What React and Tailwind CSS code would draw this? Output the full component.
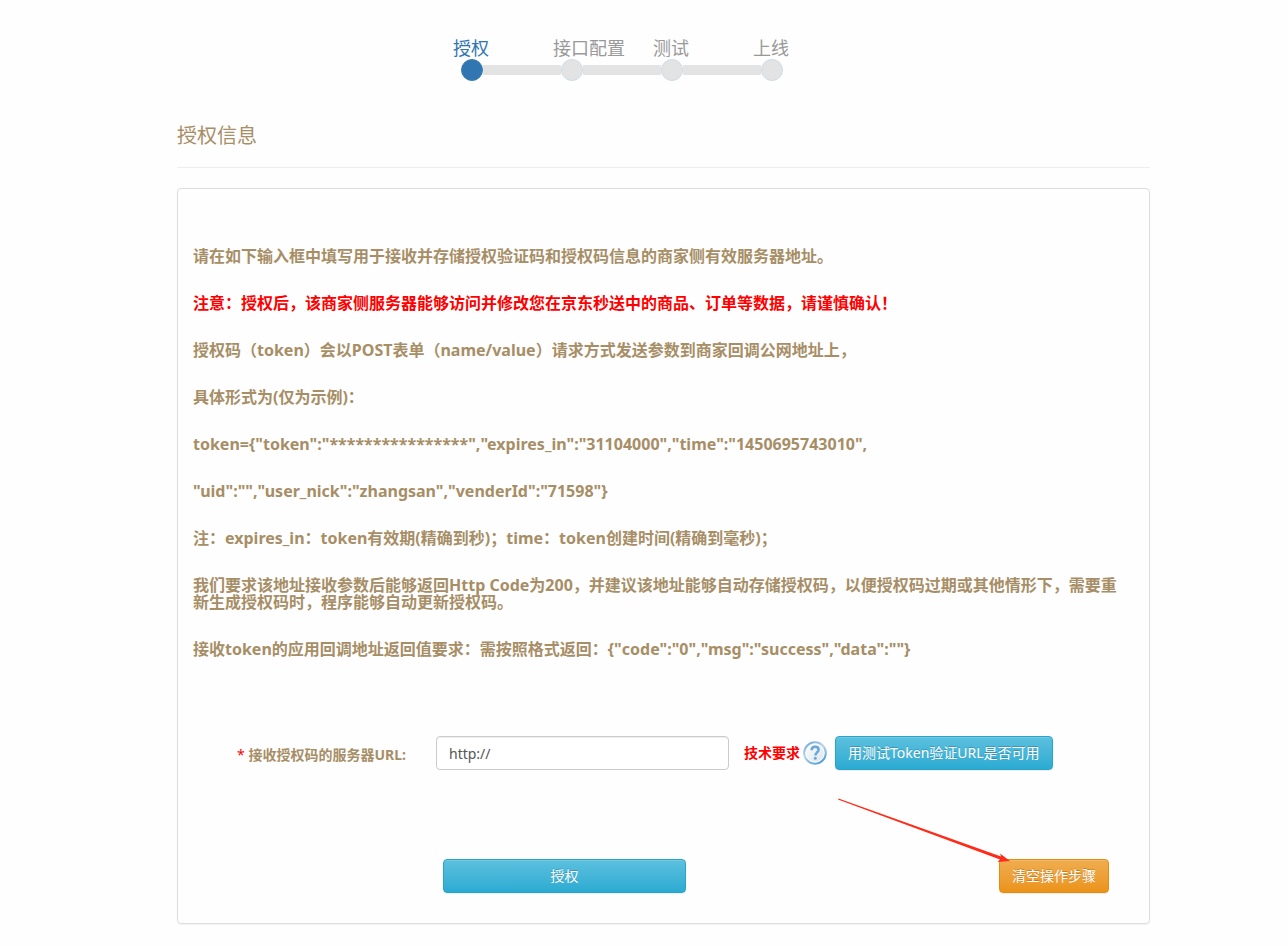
const steps = ['授权', '接口配置', '测试', '上线'];

const paragraphs = [
  { text: '请在如下输入框中填写用于接收并存储授权验证码和授权码信息的商家侧有效服务器地址。' },
  {
    text: '注意：授权后，该商家侧服务器能够访问并修改您在京东秒送中的商品、订单等数据，请谨慎确认！',
    warning: true,
  },
  { text: '授权码（token）会以POST表单（name/value）请求方式发送参数到商家回调公网地址上，' },
  { text: '具体形式为(仅为示例)：' },
  { text: 'token={"token":"****************","expires_in":"31104000","time":"1450695743010",' },
  { text: '"uid":"","user_nick":"zhangsan","venderId":"71598"}' },
  { text: '注：expires_in：token有效期(精确到秒)；time：token创建时间(精确到毫秒)；' },
  {
    text: '我们要求该地址接收参数后能够返回Http Code为200，并建议该地址能够自动存储授权码，以便授权码过期或其他情形下，需要重新生成授权码时，程序能够自动更新授权码。',
  },
  { text: '接收token的应用回调地址返回值要求：需按照格式返回：{"code":"0","msg":"success","data":""}' },
];

function Steps() {
  return (
    <ol className="ml-[276px] flex">
      {steps.map((label, i) => (
        <li key={label} className="w-[100px] shrink-0" aria-current={i === 0 ? 'step' : undefined}>
          <div
            className={
              i === 0
                ? 'whitespace-nowrap text-lg leading-[22px] text-[#3276b1]'
                : 'whitespace-nowrap text-lg leading-[22px] text-[#999999]'
            }
          >
            {label}
          </div>
          <div className="-mr-2 ml-2 flex items-center">
            <span
              className={
                i === 0
                  ? 'size-[22px] shrink-0 rounded-full border border-[#3a7fae] bg-[#3276b1]'
                  : 'size-[22px] shrink-0 rounded-full border border-[#cbdce6] bg-[#e3e3e3]'
              }
            />
            {i < steps.length - 1 && <span className="h-[10px] flex-1 bg-[#e3e3e3]" />}
          </div>
        </li>
      ))}
    </ol>
  );
}

function HelpIcon() {
  return (
    <svg viewBox="0 0 24 24" className="size-6" role="img" aria-label="帮助">
      <defs>
        <linearGradient id="ring" x1="0" y1="0" x2="0.6" y2="1">
          <stop offset="0" stopColor="#6fa5d8" />
          <stop offset="0.5" stopColor="#b9d6ee" />
          <stop offset="1" stopColor="#5aa5dc" />
        </linearGradient>
        <linearGradient id="face" x1="0" y1="0" x2="1" y2="1">
          <stop offset="0" stopColor="#ffffff" />
          <stop offset="1" stopColor="#d9e3ea" />
        </linearGradient>
      </defs>
      <circle cx="12" cy="12" r="10.700" fill="url(#face)" stroke="url(#ring)" strokeWidth="2.200" />
      <circle cx="12" cy="12" r="9.200" fill="none" stroke="#ffffff" strokeWidth="0.900" />
      <path
        d="M8.600 9.200C8.700 6.900 10.100 5.800 12.100 5.800c2.100 0 3.500 1.200 3.500 3 0 2.400-3.200 2.900-3.200 5.700"
        fill="none"
        stroke="#68a6dc"
        strokeWidth="2.500"
      />
      <circle cx="12.300" cy="17.300" r="1.500" fill="#68a6dc" />
    </svg>
  );
}

const blueButton =
  'h-[34px] rounded border border-[#28a4c9] bg-linear-to-b from-[#5bc0de] to-[#2aabd2] text-sm text-white text-shadow-[0_-1px_0_rgb(0_0_0/0.2)] shadow-[inset_0_1px_0_rgb(255_255_255/0.15),0_1px_1px_rgb(0_0_0/0.075)]';

export default function App() {
  return (
    <main className="min-h-screen bg-[#fefefe] pt-[37px] pr-[138px] pb-[22px] pl-[177px] font-['Noto_Sans','Noto_Sans_CJK_SC',sans-serif] text-[#a78e66]">
      <Steps />

      <h1 className="mt-10 border-b border-[#eeeeee] pb-[17px] text-xl leading-[29px]">授权信息</h1>

      <section className="mt-5 rounded border border-[#dddddd] px-[15px] pt-[59px] pb-[30px] shadow-[0_1px_1px_rgb(0_0_0/0.05)]">
        <div className="flex flex-col gap-[30px] pr-3 text-base leading-[17px] font-bold">
          {paragraphs.map((p) => (
            <p key={p.text} className={p.warning ? 'text-[#ff0000]' : undefined}>
              {p.text}
            </p>
          ))}
        </div>

        <form onSubmit={(e) => e.preventDefault()}>
          <div className="mt-[78px] flex items-center">
            <label htmlFor="server-url" className="w-[213px] shrink-0 pt-1 text-right text-sm font-bold whitespace-nowrap">
              <span className="font-normal text-[#ff0000]">*</span> 接收授权码的服务器URL:
            </label>
            <input
              id="server-url"
              type="text"
              defaultValue="http://"
              className="ml-[30px] h-[34px] w-[293px] rounded border border-[#cccccc] bg-white px-3 text-sm text-[#555555] shadow-[inset_0_1px_1px_rgb(0_0_0/0.075)]"
            />
            <a href="#requirements" className="ml-[15px] flex shrink-0 items-center gap-[3px] text-sm font-bold text-[#ff0000]">
              技术要求
              <HelpIcon />
            </a>
            <button type="button" className={`${blueButton} ml-2 shrink-0 px-3`}>
              用测试Token验证URL是否可用
            </button>
          </div>

          <div className="mt-[89px] flex items-center justify-between pr-[25px] pl-[250px]">
            <button type="submit" className={`${blueButton} w-[243px]`}>
              授权
            </button>
            <div className="relative">
              <button
                type="button"
                className="h-[34px] rounded border border-[#e38d13] bg-linear-to-b from-[#f0ad4e] to-[#eb9316] px-3 text-sm text-white shadow-[inset_0_1px_0_rgb(255_255_255/0.15),0_1px_1px_rgb(0_0_0/0.075)] text-shadow-[0_-1px_0_rgb(0_0_0/0.2)]"
              >
                清空操作步骤
              </button>
              <svg
                viewBox="0 0 172 64"
                className="pointer-events-none absolute -top-[61px] right-[99px] h-16 w-[172px]"
                aria-hidden="true"
              >
                <path d="M0 1.500L0.500 0.500L163 58.500L162 55.500L172 63L159.500 64L162 61.500Z" fill="#ff2a17" />
              </svg>
            </div>
          </div>
        </form>
      </section>
    </main>
  );
}
